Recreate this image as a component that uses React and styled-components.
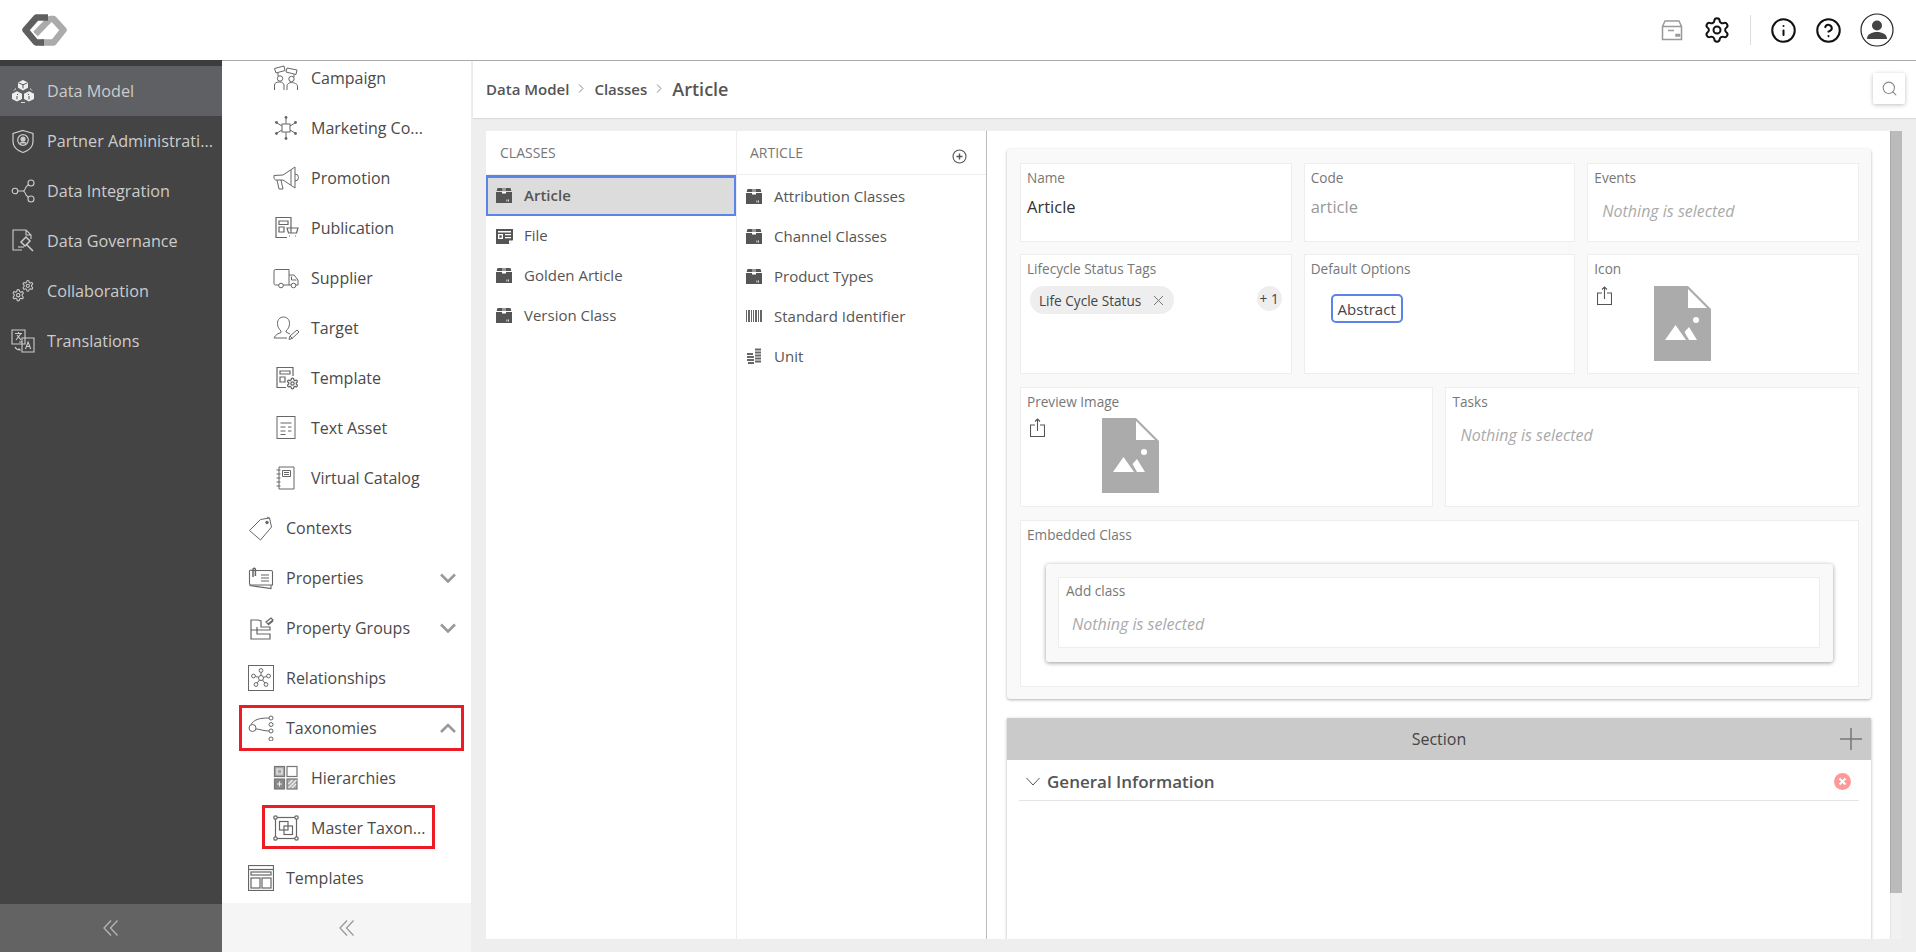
import React from "react";
import styled, { createGlobalStyle } from "styled-components";
import { Settings, Info, CircleHelp, Search } from "lucide-react";

const Global = createGlobalStyle`
  html, body { margin: 0; padding: 0; height: 100%; overflow: hidden; }
  body { font-family: "Open Sans", "Liberation Sans", sans-serif; background: #fff; color: #444; }
  #root { height: 100%; }
  * { box-sizing: border-box; }
`;

const Page = styled.div`display: flex; flex-direction: column; width: 1916px; height: 952px;`;
const Header = styled.header`height: 60px; flex: none; display: flex; align-items: center; justify-content: space-between; padding: 0 13px 0 22px; background: #fff;`;
const Tools = styled.div`display: flex; align-items: center;`;
const ToolSlot = styled.span`display: flex; align-items: center; justify-content: center; width: ${p => p.$w || 45}px; color: #111;`;
const ToolSep = styled.span`width: 1px; height: 30px; background: #ddd; margin: 0 10px 0 11px;`;
const Body = styled.div`flex: 1; display: flex; min-height: 0;`;

const Rail = styled.nav`width: 222px; flex: none; display: flex; flex-direction: column; background: #444; border-top: 6px solid #3c3c3c;`;
const RailList = styled.div`flex: 1;`;
const RailItem = styled.div`height: 50px; display: flex; align-items: center; gap: 12px; padding-left: 11px; padding-right: 8px; font-size: 16.2px; color: #ccc; background: ${p => (p.$active ? "#5f6063" : "transparent")};`;
const RailLabel = styled.span`flex: 1; min-width: 0; white-space: nowrap; margin-top: -1px;`;
const RailFoot = styled.div`height: 48px; flex: none; display: flex; align-items: center; justify-content: center; background: #636363; color: #b5b5b5;`;

const SubNav = styled.nav`width: 249px; flex: none; display: flex; flex-direction: column; background: #fff; border-top: 1px solid #aaa;`;
const SubScroll = styled.div`flex: 1; min-height: 0; overflow: hidden;`;
const SubList = styled.div`margin-top: -8px;`;
const SubItem = styled.div`
  position: relative; height: 50px; display: flex; align-items: center; gap: 12px; font-size: 16px; color: #4a4a4a;
  padding-left: ${p => (p.$child ? 51 : 26)}px; padding-right: 15px;
  ${p => p.$mark && `&::after { content: ""; position: absolute; border: 3px solid #ed1c24; left: ${p.$mark[0]}px; right: ${p.$mark[1]}px; top: 2px; bottom: ${p.$mark[2]}px; }`}
`;
const SubLabel = styled.span`flex: 1; white-space: nowrap;`;
const SubFoot = styled.div`height: 49px; flex: none; display: flex; align-items: center; justify-content: center; background: #f5f5f5; color: #999;`;

const Main = styled.main`flex: 1; min-width: 0; display: flex; flex-direction: column; background: #eee; border-top: 1px solid #aaa; padding-left: 2px;`;
const Crumbs = styled.div`height: 57px; flex: none; display: flex; align-items: center; background: #fff; padding: 0 11px 2px 13px; box-shadow: 0 1px 1px rgba(0,0,0,.08); font-weight: 600; color: #555;`;
const Crumb = styled.span`font-size: ${p => (p.$last ? 18 : 15)}px;`;
const CrumbSep = styled.span`display: flex; width: 25px; justify-content: center; color: #888;`;
const SearchBtn = styled.div`margin-left: auto; width: 32px; height: 31px; display: flex; align-items: center; justify-content: center; background: #fff; border-radius: 2px; box-shadow: 0 1px 4px rgba(0,0,0,.25); color: #888;`;

const Panel = styled.div`height: 808px; margin: 13px 14px 13px 13px; display: flex; background: #fff;`;
const ListCol = styled.section`flex: none; width: ${p => p.$w}px; display: flex; flex-direction: column; border-right: 1px solid ${p => p.$edge};`;
const ColHead = styled.div`height: 44px; flex: none; display: flex; align-items: flex-start; justify-content: space-between; padding: 13px 19px 0 ${p => p.$pad}px; font-size: 14px; line-height: 18px; color: #777; border-bottom: 1px solid #eee;`;
const AddSlot = styled.span`display: flex; margin-top: 5px;`;
const ColList = styled.div`padding-top: ${p => p.$top}px;`;
const ClassRow = styled.div`
  height: 40px; display: flex; align-items: center; gap: ${p => p.$gap}px; padding: 0 0 2px ${p => p.$pad}px; font-size: 15px; color: #555;
  ${p => p.$active && `background: #dcdcdc; border: 2px solid #5b84e8; box-shadow: 0 -1px 0 #5b84e8; font-weight: 600; padding-left: ${p.$pad - 2}px;`}
`;

const Detail = styled.div`flex: 1; min-width: 0; overflow: hidden; padding: 18px 19px 0 20px;`;
const Scrollbar = styled.div`width: 12px; flex: none; background: #f1f1f1; border-left: 1px solid #e4e4e4;`;
const Thumb = styled.div`height: 762px; margin-left: -1px; background: #bbb; border-left: 1px solid #aaa;`;

const Card = styled.div`display: grid; grid-template-columns: repeat(6, 1fr); grid-template-rows: 79px 119.8px 120.8px 167px; column-gap: 12px; row-gap: 12.4px; padding: 14px 12px 12.2px 13px; background: #f9f9f9; border-radius: 3px; box-shadow: 0 1px 3px rgba(0,0,0,.3);`;
const Field = styled.div`grid-column: span ${p => p.$span}; min-width: 0; background: #fff; border: 1px solid #eee; padding: 5px 6px 4px;`;
const Label = styled.div`font-size: 13.6px; line-height: 18px; color: #777;`;
const Value = styled.div`font-size: 16.5px; line-height: 22px; margin-top: 9px; color: ${p => (p.$muted ? "#999" : "#333")};`;
const Empty = styled.div`font-size: 16px; font-style: italic; line-height: 20px; color: #aaa; margin: ${p => p.$m || "14px 0 0 8px"};`;
const TagRow = styled.div`display: flex; justify-content: space-between; align-items: flex-start; margin: 8px 3px 0 3px;`;
const Chip = styled.span`height: 28px; display: flex; align-items: center; gap: 12px; padding: 0 10px 0 9px; border-radius: 14px; background: #eee; font-size: 13.6px; color: #444;`;
const More = styled.span`width: 25px; height: 25px; border-radius: 50%; background: #eee; display: flex; align-items: center; justify-content: center; font-size: 13.6px; color: #444;`;
const OptionBtn = styled.span`display: inline-flex; align-items: center; justify-content: center; width: 72px; height: 29px; margin: 16px 0 0 20px; border: 2px solid #5b84e8; border-radius: 5px; font-size: 15px; color: #444;`;
const Upload = styled.div`display: flex; align-items: flex-start; gap: ${p => p.$gap}px; padding: ${p => p.$top}px 0 0 3px;`;
const InnerCard = styled.div`margin: 20px 19px 0 19px; padding: 13px 13px 14px 12px; background: #f9f9f9; border-radius: 3px; box-shadow: 0 1px 4px rgba(0,0,0,.4);`;
const InnerField = styled.div`height: 71px; background: #fff; border: 1px solid #eee; padding: 4px 6px 0 7px;`;

const SectionCard = styled.div`margin-top: 19px; height: 230px; background: #fff; box-shadow: 0 1px 3px rgba(0,0,0,.3);`;
const SectionHead = styled.div`position: relative; height: 42px; display: flex; align-items: center; justify-content: center; background: #cacaca; font-size: 16px; color: #444;`;
const PlusSlot = styled.span`position: absolute; right: 9px; top: 10px; display: flex; color: #777;`;
const SectionBody = styled.div`padding: 0 12px;`;
const SectionRow = styled.div`height: 41px; display: flex; align-items: center; border-bottom: 1px solid #e4e4e4; gap: 7px; padding: 3px 8px 0 7px; font-size: 17px; font-weight: 600; color: #555;`;
const SectionTitle = styled.span`flex: 1;`;

const Svg = styled.svg`display: block; flex: none; fill: none; stroke: currentColor; stroke-width: ${p => p.$sw || 1}; color: ${p => p.$c || "inherit"};`;
const Ico = ({ s = 26, h, c, sw, vb, children }) => (
  <Svg width={s} height={h || s} viewBox={vb || `0 0 ${s} ${h || s}`} $c={c} $sw={sw}>{children}</Svg>
);
const GEAR = "M12.22 2h-.44a2 2 0 0 0-2 2v.18a2 2 0 0 1-1 1.73l-.43.25a2 2 0 0 1-2 0l-.15-.08a2 2 0 0 0-2.73.73l-.22.38a2 2 0 0 0 .73 2.73l.15.1a2 2 0 0 1 1 1.72v.51a2 2 0 0 1-1 1.74l-.15.09a2 2 0 0 0-.73 2.73l.22.38a2 2 0 0 0 2.73.73l.15-.08a2 2 0 0 1 2 0l.43.25a2 2 0 0 1 1 1.73V20a2 2 0 0 0 2 2h.44a2 2 0 0 0 2-2v-.18a2 2 0 0 1 1-1.73l.43-.25a2 2 0 0 1 2 0l.15.08a2 2 0 0 0 2.73-.73l.22-.39a2 2 0 0 0-.73-2.73l-.15-.08a2 2 0 0 1-1-1.74v-.5a2 2 0 0 1 1-1.74l.15-.09a2 2 0 0 0 .73-2.73l-.22-.38a2 2 0 0 0-2.73-.73l-.15.08a2 2 0 0 1-2 0l-.43-.25a2 2 0 0 1-1-1.73V4a2 2 0 0 0-2-2z";

const Logo = () => (
  <svg width="45" height="32" viewBox="0 0 45 32" style={{ display: "block" }} fill="none" strokeWidth="6.5" strokeLinejoin="round">
    <path d="M13.500 20L28 5H31.500L41.500 16L31.500 28.500H19" stroke="#ababab" />
    <path d="M26 3.500H14.500L3.500 16L14 28.500H22" stroke="#5f5f5f" />
  </svg>
);

const DoubleLeft = () => (
  <Ico s={16} sw={1.3}><path d="M8 0.5L1 8l7 7.5M14.5 0.5L7.5 8l7 7.5" /></Ico>
);
const Chevron = ({ up }) => (
  <Ico s={16} h={10} sw={2.6} c="#999">
    <path d={up ? "M1 9l7-7 7 7" : "M1 1.5l7 7 7-7"} />
  </Ico>
);

/* ---- rail icons ---- */
const CubesIcon = () => (
  <Ico s={24} h={24} c="#e8e8e8">
    <g fill="#eee" stroke="none">
      <path d="M12 1l5 2.6v5.2L12 11.400 7 8.800V3.600z" />
      <path d="M6 12.200l5 2.600V20l-5 2.600L1 20v-5.200z" />
      <path d="M18 12.200l5 2.600V20l-5 2.600-5-2.600v-5.200z" />
    </g>
    <path d="M12 5.800v3.600M6 17v3.400M18 17v3.400M7.200 15l-1.200.8M16.800 15l1.200.8M12 5.800L7.500 3.800M12 5.800l4.500-2" stroke="#555" />
    <path d="M5 9.500a8 8 0 0 0-2 2M19 9.500a8 8 0 0 1 2 2M10 23.500h4" stroke="#ddd" />
  </Ico>
);
const ShieldIcon = () => (
  <Ico s={24} c="#ccc" sw={1.2}>
    <path d="M12 1.500l10 3v8c0 5-4 9-10 11C6 21.500 2 17.500 2 12.500v-8z" />
    <circle cx="12" cy="11" r="5.300" />
    <circle cx="12" cy="10" r="2" fill="currentColor" />
    <path d="M8.800 14.500c1-2 5.400-2 6.400 0" fill="currentColor" />
  </Ico>
);
const NodesIcon = () => (
  <Ico s={24} c="#ccc" sw={1.1}>
    <circle cx="4" cy="12" r="2.800" /><circle cx="20" cy="4" r="3" /><circle cx="20" cy="20" r="3" />
    <path d="M7 12h5c2 0 2-2 3-4l2.500-2.500M12 12c2 0 2 2 3 4l2.500 2.500" />
  </Ico>
);
const GavelDocIcon = () => (
  <Ico s={24} c="#ccc" sw={1.1}>
    <path d="M11 21H2V1h13l5 5v4M15 1v5h5" />
    <path d="M10 13l5-5 4 4-5 5zM15 15l7 7" strokeWidth="1.500" />
    <path d="M7 18h6" />
  </Ico>
);
const GearsIcon = () => (
  <Ico s={24} c="#ccc" sw={1.1}>
    <g transform="translate(10.500 .5) scale(.53)" strokeWidth="2"><path d={GEAR} /><circle cx="12" cy="12" r="3" /></g>
    <g transform="translate(.5 9.500) scale(.56)" strokeWidth="2"><path d={GEAR} /><circle cx="12" cy="12" r="3" /></g>
  </Ico>
);
const TranslateIcon = () => (
  <Ico s={24} c="#ccc" sw={1.1}>
    <path d="M1 1h13v14H1zM11 9h12v14H11z" fill="#444" />
    <path d="M4 4.500h7M7.500 3v1.500M5 11l5-6.500M6 6l4 5M14.500 20l2.600-7 2.600 7M15.500 17.500h3.500" />
    <path d="M4 18c1 2 3 3 5 3l-1.500-1.500M8 13h3" />
  </Ico>
);

/* ---- sub-nav icons ---- */
const S = ({ children, sw }) => <Ico s={26} c="#666" sw={sw || 1}>{children}</Ico>;
const CampaignIcon = () => (
  <S>
    <path d="M1.500 3.500L11 1l1 4.500-9 2.500zM14 3l10 2-1 4.500-10-2.500z" />
    <circle cx="7" cy="13.500" r="2.700" /><circle cx="18.500" cy="14" r="2.700" />
    <path d="M1.500 25v-5c0-2 2-3 5-3s4 1 4.500 3v5M14 25v-4c0-2 2-3.500 4.500-3.500S24.500 19 24.500 21v4M5 8l0 3M21 9.500V12" />
  </S>
);
const MarketingIcon = () => (
  <S>
    <rect x="9" y="9" width="8" height="8" fill="none" />
    <path d="M13 3.500V9M13 17v5.500M9 11L4 8M9 15l-5 3M17 11l5-3M17 15l5 3" />
    <g fill="#666" stroke="none"><circle cx="13" cy="2.500" r="1.400" /><circle cx="13" cy="23.500" r="1.400" /><circle cx="3.500" cy="7.500" r="1.400" /><circle cx="3.500" cy="18.500" r="1.400" /><circle cx="22.500" cy="7.500" r="1.400" /><circle cx="22.500" cy="18.500" r="1.400" /></g>
  </S>
);
const MegaphoneIcon = () => (
  <S>
    <path d="M1 10.500l9-.5L22 2v21l-12-8H3c-1 0-2-1-2-2z" />
    <path d="M22 9a3.500 3.500 0 0 1 0 7M4 15l2 9h4l-2-9" />
    <path d="M18 5v15" />
  </S>
);
const PublicationIcon = () => (
  <S sw={1.200}>
    <path d="M18 18V2.500H3v20h11" /><path d="M6 6h9v3.500H6zM6 12h5v5H6z" />
    <path d="M14 13h11l-1.500 5h-8zM16 21h1M22 21h1" />
  </S>
);
const TruckIcon = () => (
  <S>
    <path d="M6 20H2.500a1.500 1.500 0 0 1-1.500-1.500V6a1.500 1.500 0 0 1 1.500-1.500H16V20H10M16 10h5l4 5v5h-2.500M16 20h2" />
    <circle cx="8" cy="20.500" r="2.300" /><circle cx="20.500" cy="20.500" r="2.300" />
    <path d="M18.500 11.500v3.500h5" />
  </S>
);
const TargetIcon = () => (
  <S>
    <path d="M8 16c-2-2-3.500-4-3.500-7.500C4.500 4.500 7 2 10.500 2s6 2.500 6 6.500c0 3.500-1.500 5.500-3.500 7.500v1l4 2M8 16v1.500c-2.500 1-5.500 2-7 5.500h13" />
    <path d="M16 24.500l1-3.500 7-6 2 2-7 6.500zM17 21l2.500 2.500" />
  </S>
);
const TemplateSmallIcon = () => (
  <S sw={1.200}>
    <path d="M20 11V2.500H4v20h9" /><path d="M7 6h10v3H7zM7 12h5v5H7z" />
    <g transform="translate(13 12) scale(.54)" strokeWidth="2.400"><path d={GEAR} /><circle cx="12" cy="12" r="3" /></g>
  </S>
);
const TextAssetIcon = () => (
  <S>
    <rect x="4" y="1.500" width="18" height="22" />
    <path d="M7.500 8h11M7.500 12h5M15 12h3.500M7.500 16h5M15 16h3.500M7.500 19.500h5" />
  </S>
);
const CatalogIcon = () => (
  <S>
    <path d="M6 2h15v22H6zM3.500 5h4M3.500 9h4M3.500 13h4M3.500 17h4M3.500 21h4" />
    <path d="M9.500 5.500h8v6h-8zM11 7.500h5M11 9.500h5" />
  </S>
);
const TagIcon = () => (
  <S>
    <path d="M1.500 15.500L12.500 4.500l9-1.500 2 9L12.500 25z" />
    <circle cx="19" cy="7.500" r="1.300" fill="#666" />
    <path d="M19 2l3 1.500" />
  </S>
);
const PropertiesIcon = () => (
  <S sw={1.100}>
    <path d="M4 5.500h19a1.500 1.500 0 0 1 1.500 1.500v13H3a1.500 1.500 0 0 1-1.500-1.500V7A1.500 1.500 0 0 1 4 5.500z" />
    <path d="M13 10h8M13 13h8M13 16h8M1.500 20.500L23 23.500v-3.500" />
    <path d="M5 12V4.500a1.200 1.200 0 0 1 2.400 0V11" strokeWidth="1.500" />
  </S>
);
const PropGroupIcon = () => (
  <S sw={1.200}>
    <path d="M3 5v19h19v-5H9v-4h13v-3H13V6l-3-1zM9 19v-4M3 24h19" />
    <path d="M9 12v3H3M18 7l5-4 2 2-5 4zM20 10l5-4" />
  </S>
);
const RelationIcon = () => (
  <S>
    <rect x="0.500" y="0.500" width="25" height="25" />
    <circle cx="13" cy="13" r="2.500" /><circle cx="13" cy="5.500" r="1.900" /><circle cx="5.500" cy="11" r="1.900" /><circle cx="20.500" cy="11" r="1.900" /><circle cx="8" cy="19.500" r="1.900" /><circle cx="18" cy="19.500" r="1.900" />
    <path d="M13 7.400v3.100M7.400 11.500l3.100.8M18.600 11.500l-3.100.8M9.200 18l2.300-3M16.800 18l-2.300-3" />
  </S>
);
const TaxonomyIcon = () => (
  <S>
    <circle cx="4.500" cy="13" r="3.500" />
    <circle cx="23" cy="3" r="2" /><circle cx="23" cy="9.500" r="2" /><circle cx="23" cy="16" r="2" /><circle cx="23" cy="24" r="2" />
    <path d="M3 9.500C6 5 10 3 21 3M8 14c4 0 7 2 13 2" />
  </S>
);
const HierarchyIcon = () => (
  <Ico s={26} c="#777" sw={1.200}>
    <rect x="1.500" y="1.500" width="10" height="10" fill="#aaa" />
    <rect x="14" y="1.500" width="10" height="10" />
    <rect x="1.500" y="14" width="10" height="10" fill="#888" />
    <rect x="14" y="14" width="10" height="10" fill="#aaa" />
    <path d="M4 4h5v5H4zM4 19h5M6.500 16.500v5M15.500 23l8-8M15.500 19l4-4M19 23l4-4" stroke="#eee" />
  </Ico>
);
const MasterIcon = () => (
  <S sw={1.200}>
    <rect x="2.500" y="2.500" width="21" height="21" />
    <rect x="6.500" y="6.500" width="8.500" height="8.500" />
    <rect x="11" y="11" width="8.500" height="8.500" />
    <g fill="#fff"><circle cx="2.500" cy="2.500" r="1.700" /><circle cx="23.500" cy="2.500" r="1.700" /><circle cx="2.500" cy="23.500" r="1.700" /><circle cx="23.500" cy="23.500" r="1.700" /></g>
  </S>
);
const TemplatesIcon = () => (
  <S sw={1.200}>
    <rect x="0.500" y="0.500" width="25" height="25" />
    <path d="M1 4.500h24" /><rect x="3" y="7" width="20" height="3" />
    <rect x="3" y="13" width="9" height="10" /><rect x="14" y="13" width="9" height="10" />
  </S>
);

/* ---- list icons ---- */
const BoxFill = () => (
  <Svg width="16" height="16" viewBox="0 0 16 16" style={{ stroke: "none" }}>
    <path fill="#555" d="M0 5h16v11H0zM1.500 1H6v3H.7zM10 1h4.500l.8 3H10z" />
    <path fill="#999" d="M6 1h4v3H6z" />
    <path fill="#fff" d="M6 5h4v1.500H6zM10.500 12.500h.8v2h-.8zM12.200 12.500h.8v2h-.8z" />
  </Svg>
);
const FileFill = () => (
  <Svg width="17" height="17" viewBox="0 0 17 17" style={{ stroke: "none" }}>
    <path fill="#555" d="M0 2h17v11l-4 4H0z" />
    <path fill="#fff" d="M2 4h13v1.500H2zM2 7h5v5H2zM9 7h6v1.300H9zM9 10h6v1.300H9zM13 17v-3.500h4z" />
    <path fill="#555" d="M3.300 8.300h2.400v2.400H3.300z" />
  </Svg>
);
const BarcodeFill = () => (
  <Svg width="16" height="16" viewBox="0 0 16 16" style={{ stroke: "none" }}>
    <path fill="#666" d="M0 2h1v12H0zM2 2h2v12H2zM5 2h1v12H5zM7 2h1v12H7zM9 2h2v12H9zM12 2h1v12h-1zM14 2h2v12h-2z" />
  </Svg>
);
const CoinsFill = () => (
  <Svg width="16" height="16" viewBox="0 0 16 16" style={{ stroke: "none" }}>
    <path fill="#666" d="M1 5h6v2H1zM1 8h7v2H1zM1 11h7v2H1zM2 14h6v2H2zM9 0.500h6v2H9zM9 3.500h6v2H9zM9 6.500h6v2H9zM9 9.500h6v2H9zM9 12.500h6v2H9z" />
  </Svg>
);

const DocPlaceholder = () => (
  <svg width="57" height="75" viewBox="0 0 57 75" style={{ display: "block" }}>
    <path fill="#ababab" d="M0 0h34l23 23v52H0z" />
    <path fill="#fff" d="M34 3l19 19H34z" />
    <circle fill="#fff" cx="42" cy="34" r="3" />
    <path fill="#fff" d="M11 54l10.500-15L32 54zM30.500 46l4.500-5 8 13h-8z" />
  </svg>
);
const UploadIcon = () => (
  <Ico s={15} h={19} c="#555" sw={1.100}>
    <path d="M5 7H.5v11.500h14V7H10M7.500 13V1M5 3.500L7.500 1 10 3.500" />
  </Ico>
);
const ClearX = () => (
  <Ico s={11} c="#777" sw={1}><path d="M1 1l9 9M10 1l-9 9" /></Ico>
);
const AddCircle = () => (
  <Ico s={15} c="#555" sw={1.100}>
    <circle cx="7.500" cy="7.500" r="6.500" /><path d="M7.500 4.500v6M4.500 7.500h6" strokeWidth="1.400" />
  </Ico>
);
const UserIcon = () => (
  <Ico s={34} c="#222" sw={1.200}>
    <circle cx="17" cy="17" r="16" />
    <circle cx="17" cy="12.500" r="5" fill="#444" stroke="none" />
    <path d="M7 26c0-5 5-7 10-7s10 2 10 7z" fill="#444" stroke="none" />
  </Ico>
);
const PackageIcon = () => (
  <Ico s={22} c="#999" sw={1.500}>
    <path d="M1.500 7.500h19v13h-19zM1.500 7.500L4 2h14l2.500 5.500M7 11.500h6" />
    <path d="M15 15.500h1v1.500h-1zM17.500 15.500h1v1.500h-1z" />
  </Ico>
);
const PlusIcon = () => <Ico s={22} c="#777" sw={1.500}><path d="M11 0v22M0 11h22" /></Ico>;
const RemoveDot = () => (
  <svg width="17" height="17" viewBox="0 0 17 17" style={{ display: "block", flex: "none" }}>
    <circle cx="8.500" cy="8.500" r="8.500" fill="#f99" />
    <path d="M5.500 5.500l6 6M11.500 5.500l-6 6" stroke="#fff" strokeWidth="2" />
  </svg>
);
const Caret = () => <Ico s={14} h={9} c="#555" sw={1}><path d="M.5 1L7 8l6.500-7" /></Ico>;
const Sep = () => <CrumbSep><Ico s={7} h={9} c="#888"><path d="M1 .5l4 4-4 4" /></Ico></CrumbSep>;

const railItems = [
  ["Data Model", CubesIcon, true],
  ["Partner Administrati...", ShieldIcon],
  ["Data Integration", NodesIcon],
  ["Data Governance", GavelDocIcon],
  ["Collaboration", GearsIcon],
  ["Translations", TranslateIcon],
];

const subItems = [
  { t: "Campaign", I: CampaignIcon, child: true },
  { t: "Marketing Co...", I: MarketingIcon, child: true },
  { t: "Promotion", I: MegaphoneIcon, child: true },
  { t: "Publication", I: PublicationIcon, child: true },
  { t: "Supplier", I: TruckIcon, child: true },
  { t: "Target", I: TargetIcon, child: true },
  { t: "Template", I: TemplateSmallIcon, child: true },
  { t: "Text Asset", I: TextAssetIcon, child: true },
  { t: "Virtual Catalog", I: CatalogIcon, child: true },
  { t: "Contexts", I: TagIcon },
  { t: "Properties", I: PropertiesIcon, chev: "down" },
  { t: "Property Groups", I: PropGroupIcon, chev: "down" },
  { t: "Relationships", I: RelationIcon },
  { t: "Taxonomies", I: TaxonomyIcon, chev: "up", mark: [17, 7, 2] },
  { t: "Hierarchies", I: HierarchyIcon, child: true },
  { t: "Master Taxon...", I: MasterIcon, child: true, mark: [40, 36, 4] },
  { t: "Templates", I: TemplatesIcon },
];

export default function App() {
  return (
    <Page>
      <Global />
      <Header>
        <Logo />
        <Tools>
          <ToolSlot><PackageIcon /></ToolSlot>
          <ToolSlot><Settings size={28} strokeWidth={1.700} /></ToolSlot>
          <ToolSep />
          <ToolSlot><Info size={27} strokeWidth={1.800} /></ToolSlot>
          <ToolSlot><CircleHelp size={27} strokeWidth={1.800} /></ToolSlot>
          <ToolSlot $w={52}><UserIcon /></ToolSlot>
        </Tools>
      </Header>
      <Body>
        <Rail>
          <RailList>
            {railItems.map(([t, I, active]) => (
              <RailItem key={t} $active={active}>
                <I />
                <RailLabel>{t}</RailLabel>
              </RailItem>
            ))}
          </RailList>
          <RailFoot><DoubleLeft /></RailFoot>
        </Rail>
        <SubNav>
          <SubScroll>
            <SubList>
              {subItems.map(({ t, I, child, chev, mark }) => (
                <SubItem key={t} $child={child} $mark={mark}>
                  <I />
                  <SubLabel>{t}</SubLabel>
                  {chev && <Chevron up={chev === "up"} />}
                </SubItem>
              ))}
            </SubList>
          </SubScroll>
          <SubFoot><DoubleLeft /></SubFoot>
        </SubNav>
        <Main>
          <Crumbs>
            <Crumb>Data Model</Crumb><Sep />
            <Crumb>Classes</Crumb><Sep />
            <Crumb $last>Article</Crumb>
            <SearchBtn><Search size={17} strokeWidth={1.500} /></SearchBtn>
          </Crumbs>
          <Panel>
            <ListCol $w={251} $edge="#eee">
              <ColHead $pad={14}>CLASSES</ColHead>
              <ColList $top={1}>
                <ClassRow $active $gap={12} $pad={10}><BoxFill />Article</ClassRow>
                <ClassRow $gap={11} $pad={10}><FileFill />File</ClassRow>
                <ClassRow $gap={12} $pad={10}><BoxFill />Golden Article</ClassRow>
                <ClassRow $gap={12} $pad={10}><BoxFill />Version Class</ClassRow>
              </ColList>
            </ListCol>
            <ListCol $w={250} $edge="#bbb">
              <ColHead $pad={13}>ARTICLE<AddSlot><AddCircle /></AddSlot></ColHead>
              <ColList $top={2}>
                <ClassRow $gap={12} $pad={9}><BoxFill />Attribution Classes</ClassRow>
                <ClassRow $gap={12} $pad={9}><BoxFill />Channel Classes</ClassRow>
                <ClassRow $gap={12} $pad={9}><BoxFill />Product Types</ClassRow>
                <ClassRow $gap={12} $pad={9}><BarcodeFill />Standard Identifier</ClassRow>
                <ClassRow $gap={12} $pad={9}><CoinsFill />Unit</ClassRow>
              </ColList>
            </ListCol>
            <Detail>
              <Card>
                <Field $span={2}><Label>Name</Label><Value>Article</Value></Field>
                <Field $span={2}><Label>Code</Label><Value $muted>article</Value></Field>
                <Field $span={2}><Label>Events</Label><Empty>Nothing is selected</Empty></Field>
                <Field $span={2}>
                  <Label>Lifecycle Status Tags</Label>
                  <TagRow><Chip>Life Cycle Status<ClearX /></Chip><More>+ 1</More></TagRow>
                </Field>
                <Field $span={2}><Label>Default Options</Label><OptionBtn>Abstract</OptionBtn></Field>
                <Field $span={2}>
                  <Label>Icon</Label>
                  <Upload $gap={42} $top={8}><UploadIcon /><DocPlaceholder /></Upload>
                </Field>
                <Field $span={3}>
                  <Label>Preview Image</Label>
                  <Upload $gap={57} $top={7}><UploadIcon /><DocPlaceholder /></Upload>
                </Field>
                <Field $span={3}><Label>Tasks</Label><Empty>Nothing is selected</Empty></Field>
                <Field $span={6}>
                  <Label>Embedded Class</Label>
                  <InnerCard>
                    <InnerField>
                      <Label>Add class</Label>
                      <Empty $m="14px 0 0 6px">Nothing is selected</Empty>
                    </InnerField>
                  </InnerCard>
                </Field>
              </Card>
              <SectionCard>
                <SectionHead>Section<PlusSlot><PlusIcon /></PlusSlot></SectionHead>
                <SectionBody>
                  <SectionRow><Caret /><SectionTitle>General Information</SectionTitle><RemoveDot /></SectionRow>
                </SectionBody>
              </SectionCard>
            </Detail>
            <Scrollbar><Thumb /></Scrollbar>
          </Panel>
        </Main>
      </Body>
    </Page>
  );
}
